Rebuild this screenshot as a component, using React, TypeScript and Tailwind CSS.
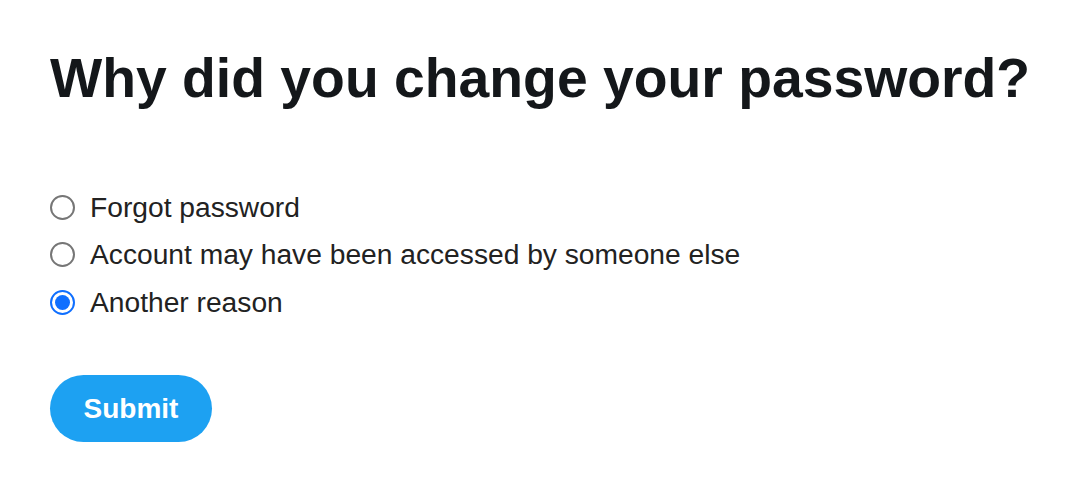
import React, { useState } from "react";

const options = [
  "Forgot password",
  "Account may have been accessed by someone else",
  "Another reason",
];

export default function App() {
  const [sel, setSel] = useState(2);
  return (
    <div className="w-[1076px] h-[494px] bg-white pl-[50px] pt-[46px] font-['Liberation_Sans',Arial,sans-serif]">
      <h1 className="text-[55.3px] leading-[64px] font-bold text-[#14171a]">
        Why did you change your password?
      </h1>
      <div className="mt-[73.5px] flex flex-col">
        {options.map((o, i) => (
          <label key={o} className="flex items-center h-[47.5px] cursor-pointer" onClick={() => setSel(i)}>
            {sel === i ? (
              <span className="w-[25px] h-[25px] rounded-full border-2 border-[#0f6fff] flex items-center justify-center">
                <span className="w-[15px] h-[15px] rounded-full bg-[#0f6fff]" />
              </span>
            ) : (
              <span className="w-[25px] h-[25px] rounded-full border-2 border-[#767676]" />
            )}
            <span className="ml-[15px] text-[28.2px] leading-[47.5px] text-[#222222]">{o}</span>
          </label>
        ))}
      </div>
      <button className="mt-[49px] w-[162px] h-[67px] rounded-full bg-[#1da1f2] text-white text-[28px] font-bold">
        Submit
      </button>
    </div>
  );
}
